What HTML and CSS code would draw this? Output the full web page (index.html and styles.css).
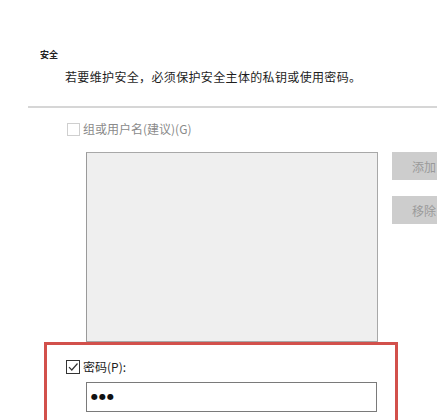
FILE: index.html
```html
<!DOCTYPE html>
<html>
<head>
  <title>安全</title>
  <link rel="stylesheet" href="styles.css">
</head>
<body>
  <div class="page">
    <div class="section-title">安全</div>
    <div class="section-desc">若要维护安全，必须保护安全主体的私钥或使用密码。</div>
    <div class="divider"></div>

    <label class="check-row disabled">
      <span class="checkbox"></span>
      <span>组或用户名(建议)(G)</span>
    </label>

    <div class="list-row">
      <div class="list-box"></div>
      <div class="btn-col">
        <button class="btn">添加</button>
        <button class="btn">移除</button>
      </div>
    </div>

    <div class="highlight">
      <label class="check-row">
        <span class="checkbox checked">
          <svg width="12" height="12" viewBox="0 0 12 12"><path d="M2 6.2 L4.8 9 L10.5 2.5" fill="none" stroke="#333" stroke-width="1.2"/></svg>
        </span>
        <span>密码(P):</span>
      </label>
      <div class="password">●●●</div>
    </div>
  </div>
</body>
</html>
```

FILE: styles.css
```css
body {
  margin: 0;
  background-color: #FFFFFF;
  font-family: "Noto Sans CJK SC", "Noto Sans", sans-serif;
  color: #222222;
  overflow: hidden;
}

.page {
  width: 437px;
  height: 420px;
  overflow: hidden;
}

.section-title {
  padding: 49px 0 0 40px;
  font-size: 9px;
  line-height: 12px;
  font-weight: bold;
}

.section-desc {
  margin-top: 8px;
  padding-left: 65px;
  font-size: 12px;
  line-height: 16px;
  letter-spacing: 0.35px;
  color: #1e1e1e;
}

.divider {
  margin: 21px 0 0 28px;
  border-top: 2px solid #d6d6d6;
}

.check-row {
  display: flex;
  align-items: center;
  gap: 3px;
  font-size: 12px;
  line-height: 14px;
}

.page > .check-row {
  margin-top: 14px;
  padding-left: 67px;
}

.check-row.disabled {
  color: #8a8a8a;
}

.checkbox {
  display: flex;
  align-items: center;
  justify-content: center;
  width: 11px;
  height: 11px;
  border: 1px solid #cfcfcf;
  background-color: #FFFFFF;
}

.checkbox.checked {
  width: 12px;
  height: 12px;
  border-color: #333333;
}

.list-row {
  display: flex;
  margin-top: 16px;
}

.list-box {
  flex-shrink: 0;
  margin-left: 86px;
  width: 290px;
  height: 188px;
  border: 1px solid #a8a8a8;
  border-left-color: #9a9a9a;
  background-color: #efefef;
}

.btn-col {
  flex-shrink: 0;
  display: flex;
  flex-direction: column;
  gap: 16px;
  margin-left: 14px;
}

.btn {
  width: 60px;
  height: 28px;
  padding: 0 0 0 20px;
  border: none;
  background-color: #cdcdcd;
  color: #9a9a9a;
  font-family: inherit;
  font-size: 12px;
  text-align: left;
}

.highlight {
  box-sizing: border-box;
  margin-left: 44px;
  width: 354px;
  height: 100px;
  padding: 15px 0 0 19px;
  border: 3px solid #d2504b;
}

.password {
  box-sizing: border-box;
  margin: 8px 0 0 20px;
  width: 291px;
  height: 30px;
  padding-left: 4px;
  border: 1px solid #7a7a7a;
  font-family: "DejaVu Sans", sans-serif;
  font-size: 8px;
  line-height: 27px;
  letter-spacing: 1px;
  color: #111111;
}
```
